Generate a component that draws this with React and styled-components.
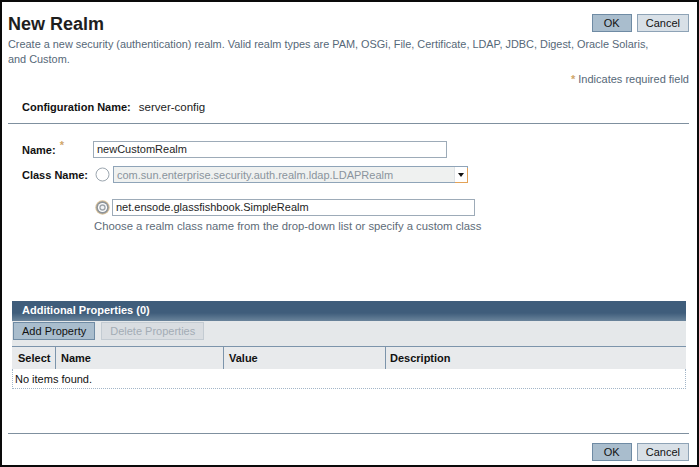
import styled, { createGlobalStyle } from "styled-components";

const GlobalStyle = createGlobalStyle`
  html, body {
    margin: 0;
    padding: 0;
    background: #fff;
  }
  body {
    font-family: "Liberation Sans", Arial, sans-serif;
  }
`;

const Frame = styled.div`
  width: 699px;
  height: 467px;
  box-sizing: border-box;
  border: 2px solid #0a0a0a;
  padding: 0 8px 0 6px;
  display: flex;
  flex-direction: column;
  overflow: hidden;
`;

const Header = styled.div`
  display: flex;
  justify-content: space-between;
  align-items: flex-start;
  margin-top: 11px;
  height: 22px;
`;

const Title = styled.h1`
  margin: 0;
  font-size: 18px;
  line-height: 22px;
  font-weight: bold;
  color: #1e1e1e;
`;

const ButtonGroup = styled.div`
  display: flex;
  gap: 5px;
  margin-top: 1px;
`;

const Button = styled.button`
  height: 18px;
  min-width: 40px;
  box-sizing: border-box;
  padding: 0 8px;
  font-family: inherit;
  font-size: 11px;
  color: ${(p) => (p.disabled ? "#a3acb5" : "#111")};
  background: ${(p) =>
    p.disabled ? "#d9dde1" : p.primary ? "#a9bdcd" : "#d8e0e7"};
  border: 1px solid
    ${(p) => (p.disabled ? "#c3cbd2" : p.primary ? "#6f8ba4" : "#8ea3b6")};
  border-radius: 0;
  cursor: pointer;
`;

const Description = styled.p`
  margin: 2px 0 0;
  font-size: 10.9px;
  line-height: 15px;
  color: #566878;
`;

const RequiredNote = styled.div`
  margin-top: 5px;
  text-align: right;
  font-size: 11px;
  line-height: 15px;
  color: #566878;
`;

const Star = styled.span`
  color: #cfa66a;
  font-weight: bold;
  margin-right: 3px;
`;

const ConfigRow = styled.div`
  margin: 13px 0 0 14px;
  display: flex;
  gap: 8px;
  font-size: 11px;
  line-height: 15px;
`;

const Label = styled.span`
  font-weight: bold;
  color: #111;
  font-size: 11px;
`;

const Value = styled.span`
  color: #222;
  font-size: 11.5px;
`;

const Separator = styled.div`
  height: 1px;
  background: #7f909f;
  margin-top: ${(p) => p.top}px;
`;

const FormGrid = styled.div`
  display: grid;
  grid-template-columns: 71px 1fr;
  margin: 17px 0 0 14px;
  row-gap: 8px;
`;

const FieldLabel = styled.div`
  height: 17px;
  display: flex;
  align-items: center;
  font-size: 11px;
  font-weight: bold;
  color: #111;
`;

const ReqStar = styled.span`
  color: #cfa66a;
  margin-left: 4px;
  font-size: 11px;
  align-self: flex-start;
  margin-top: -2px;
`;

const TextInput = styled.div`
  width: ${(p) => p.width}px;
  height: 17px;
  box-sizing: border-box;
  border: 1px solid #9dabb8;
  background: #fff;
  font-size: 11px;
  line-height: 15px;
  padding-left: 3px;
  color: #1e1e1e;
`;

const OptionList = styled.div`
  display: flex;
  flex-direction: column;
`;

const Option = styled.div`
  display: flex;
  align-items: center;
  gap: ${(p) => p.gap}px;
  margin-top: ${(p) => p.top || 0}px;
  padding-left: 2px;
`;

const Select = styled.div`
  width: 355px;
  height: 17px;
  box-sizing: border-box;
  border: 1px solid #8fa4b8;
  background: #eff1f0;
  display: flex;
  align-items: center;
  justify-content: space-between;
  font-size: 11px;
  color: #8a949d;
  padding-left: 3px;
`;

const SelectArrow = styled.span`
  width: 13px;
  height: 15px;
  box-sizing: border-box;
  background: #fff;
  border-left: 1px solid #dfe3e6;
  box-shadow: 1px 1px 0 #e3a257;
  display: flex;
  align-items: center;
  justify-content: center;
  &::after {
    content: "";
    border-left: 3px solid transparent;
    border-right: 3px solid transparent;
    border-top: 4px solid #111;
  }
`;

const HelpText = styled.div`
  margin-top: 3px;
  font-size: 11.3px;
  line-height: 14px;
  color: #5d6b78;
  padding-left: 1px;
`;

const Table = styled.div`
  margin: 68px 0 0 4px;
  width: 674px;
`;

const TableTitle = styled.div`
  height: 20px;
  box-sizing: border-box;
  padding: 3px 0 0 10px;
  background: linear-gradient(#3f5d7b 0%, #3f5d7b 60%, #6a849b 100%);
  color: #fff;
  font-size: 11px;
  font-weight: bold;
`;

const Toolbar = styled.div`
  height: 25px;
  box-sizing: border-box;
  padding: 1px 1px 0;
  background: #e5e8ea;
  display: flex;
  gap: 6px;
`;

const HeaderRow = styled.div`
  display: grid;
  grid-template-columns: 43px 168px 162px 1fr;
  height: 22px;
  border-top: 1px solid #7c94ab;
  background: #e8eaec;
`;

const HeaderCell = styled.div`
  display: flex;
  align-items: center;
  padding-left: ${(p) => p.pad}px;
  font-size: 11px;
  font-weight: bold;
  color: #111;
  border-left: ${(p) => (p.first ? "none" : "1px solid #7c94ab")};
`;

const EmptyRow = styled.div`
  height: 20px;
  box-sizing: border-box;
  border: 1px dotted #a3b6c8;
  border-top: none;
  display: flex;
  align-items: center;
  padding-left: 2px;
  font-size: 11px;
  color: #111;
`;

const Footer = styled.div`
  margin-top: auto;
  padding-bottom: 4px;
`;

const FooterButtons = styled.div`
  display: flex;
  justify-content: flex-end;
  gap: 5px;
  margin-top: 9px;
`;

const Radio = ({ checked }) => (
  <svg width="15" height="15" viewBox="0 0 15 15">
    {checked ? (
      <>
        <circle cx="7.5" cy="7.5" r="7.2" fill="#dcc398" />
        <circle cx="7.5" cy="7.5" r="6.2" fill="#8d949b" />
        <circle cx="7.5" cy="7.5" r="4.6" fill="#fff" />
        <circle cx="7.5" cy="7.5" r="3.2" fill="#a0a7ad" />
        <circle cx="7.5" cy="7.5" r="1.8" fill="#f3f4f5" />
      </>
    ) : (
      <circle cx="7.5" cy="7.5" r="6.5" fill="#fff" stroke="#9ca6af" />
    )}
  </svg>
);

const App = () => {
  return (
    <>
      <GlobalStyle />
      <Frame>
        <Header>
          <Title>New Realm</Title>
          <ButtonGroup>
            <Button primary>OK</Button>
            <Button>Cancel</Button>
          </ButtonGroup>
        </Header>
        <Description>
          Create a new security (authentication) realm. Valid realm types are
          PAM, OSGi, File, Certificate, LDAP, JDBC, Digest, Oracle Solaris,
          <br />
          and Custom.
        </Description>
        <RequiredNote>
          <Star>*</Star>Indicates required field
        </RequiredNote>
        <ConfigRow>
          <Label>Configuration Name:</Label>
          <Value>server-config</Value>
        </ConfigRow>
        <Separator top={8} />

        <FormGrid>
          <FieldLabel>
            Name:<ReqStar>*</ReqStar>
          </FieldLabel>
          <TextInput width={354}>newCustomRealm</TextInput>

          <FieldLabel>Class Name:</FieldLabel>
          <OptionList>
            <Option gap={3}>
              <Radio />
              <Select>
                com.sun.enterprise.security.auth.realm.ldap.LDAPRealm
                <SelectArrow />
              </Select>
            </Option>
            <Option gap={2} top={16}>
              <Radio checked />
              <TextInput width={363}>net.ensode.glassfishbook.SimpleRealm</TextInput>
            </Option>
            <HelpText>
              Choose a realm class name from the drop-down list or specify a
              custom class
            </HelpText>
          </OptionList>
        </FormGrid>

        <Table>
          <TableTitle>Additional Properties (0)</TableTitle>
          <Toolbar>
            <Button primary>Add Property</Button>
            <Button disabled>Delete Properties</Button>
          </Toolbar>
          <HeaderRow>
            <HeaderCell first pad={6}>Select</HeaderCell>
            <HeaderCell pad={5}>Name</HeaderCell>
            <HeaderCell pad={5}>Value</HeaderCell>
            <HeaderCell pad={4}>Description</HeaderCell>
          </HeaderRow>
          <EmptyRow>No items found.</EmptyRow>
        </Table>

        <Footer>
          <Separator top={0} />
          <FooterButtons>
            <Button primary>OK</Button>
            <Button>Cancel</Button>
          </FooterButtons>
        </Footer>
      </Frame>
    </>
  );
};

export default App;
